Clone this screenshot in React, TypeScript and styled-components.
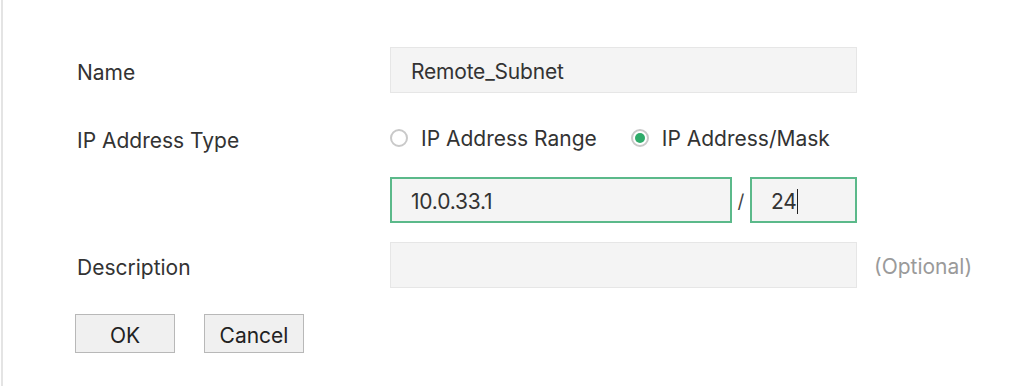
import React from "react";
import styled, { createGlobalStyle } from "styled-components";

const Global = createGlobalStyle`
  html, body { margin: 0; padding: 0; background: #ffffff; }
  body { font-family: Inter, "Noto Sans", sans-serif; color: #333333; }
`;

const Page = styled.div`
  width: 1033px;
  height: 386px;
  box-sizing: border-box;
  border-left: 2px solid #e4e4e4;
  margin-left: 1px;
  padding: 47px 0 0 74px;
`;

const Form = styled.div`
  display: grid;
  grid-template-columns: 313px auto;
  align-items: center;
`;

const Label = styled.div<{ $top?: number }>`
  font-size: 21px;
  color: #333333;
  margin-top: ${(p) => p.$top ?? 0}px;
  padding-top: 4px;
  align-self: center;
`;

const Field = styled.div<{ $top?: number }>`
  display: flex;
  align-items: center;
  margin-top: ${(p) => p.$top ?? 0}px;
`;

const Input = styled.div<{ $w: number; $focus?: boolean }>`
  box-sizing: border-box;
  width: ${(p) => p.$w}px;
  height: 46px;
  background: #f4f4f4;
  border: 1px solid ${(p) => (p.$focus ? "#5bb98a" : "#e6e6e6")};
  border-width: ${(p) => (p.$focus ? "2px" : "1px")};
  display: flex;
  align-items: center;
  padding: 3px 0 0 ${(p) => (p.$focus ? 19 : 20)}px;
  font-size: 21px;
  color: #333333;
  letter-spacing: -0.2px;
`;

const Caret = styled.span`
  display: inline-block;
  width: 1px;
  height: 25px;
  background: #222;
`;

const Slash = styled.span`
  width: 18px;
  text-align: center;
  font-size: 19px;
  padding-top: 3px;
  color: #444;
`;

const Optional = styled.span`
  margin-left: 17px;
  padding-top: 3px;
  font-size: 21px;
  color: #9a9a9a;
`;

const RadioGroup = styled.div`
  display: flex;
  align-items: center;
  height: 44px;
`;

const RadioItem = styled.label<{ $gap: number }>`
  display: flex;
  align-items: center;
  margin-right: ${(p) => p.$gap}px;
  font-size: 21px;
  color: #333;
`;

const RadioCircle = styled.span<{ $on?: boolean }>`
  box-sizing: border-box;
  width: 18px;
  height: 18px;
  border-radius: 50%;
  border: 2px solid #c9c9c9;
  background: #fff;
  margin-right: 13px;
  display: flex;
  align-items: center;
  justify-content: center;
  &::after {
    content: "";
    width: 10px;
    height: 10px;
    border-radius: 50%;
    background: ${(p) => (p.$on ? "#2fab6a" : "transparent")};
  }
`;

const Buttons = styled.div`
  display: flex;
  gap: 29px;
  margin-top: 26px;
  margin-left: -2px;
`;

const Button = styled.button`
  box-sizing: border-box;
  width: 100px;
  height: 39px;
  background: #f0f0f0;
  border: 1px solid #b8b8b8;
  font-family: Inter, "Noto Sans", sans-serif;
  font-size: 21px;
  color: #222;
  padding: 4px 0 0;
  cursor: pointer;
`;

export default function App() {
  return (
    <>
      <Global />
      <Page>
        <Form>
          <Label>Name</Label>
          <Field>
            <Input $w={467}>Remote_Subnet</Input>
          </Field>

          <Label $top={23}>IP Address Type</Label>
          <Field $top={23}>
            <RadioGroup>
              <RadioItem $gap={34}>
                <RadioCircle />
                IP Address Range
              </RadioItem>
              <RadioItem $gap={0}>
                <RadioCircle $on />
                IP Address/Mask
              </RadioItem>
            </RadioGroup>
          </Field>

          <div />
          <Field $top={17}>
            <Input $w={342} $focus>10.0.33.1</Input>
            <Slash>/</Slash>
            <Input $w={107} $focus>
              24
              <Caret />
            </Input>
          </Field>

          <Label $top={19}>Description</Label>
          <Field $top={19}>
            <Input $w={467} />
            <Optional>(Optional)</Optional>
          </Field>
        </Form>
        <Buttons>
          <Button>OK</Button>
          <Button>Cancel</Button>
        </Buttons>
      </Page>
    </>
  );
}
